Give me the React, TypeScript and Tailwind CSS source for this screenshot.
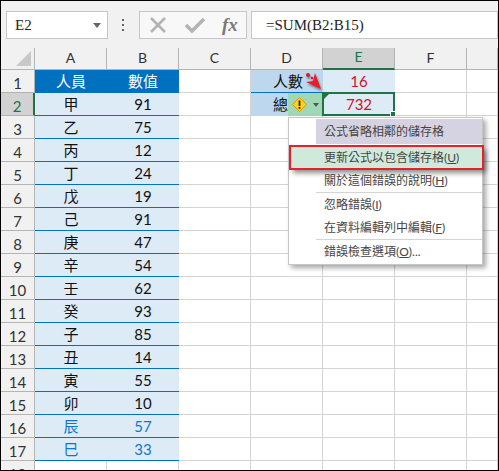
const people = ["甲", "乙", "丙", "丁", "戊", "己", "庚", "辛", "壬", "癸", "子", "丑", "寅", "卯", "辰", "巳"];
const values = [91, 75, 12, 24, 19, 91, 47, 54, 62, 93, 85, 14, 55, 10, 57, 33];
const columns = ["A", "B", "C", "D", "E", "F", ""];

function Blank() {
  return <div className="border-r border-b border-[#d4d4d4]" />;
}

function RowHead({ n, active }: { n: number; active?: boolean }) {
  return (
    <div
      className={`flex items-center justify-center border-b border-r text-[15px] pt-1 ${
        active ? "bg-[#d2d2d2] border-r-2 border-r-[#217346] border-b-[#b4b4b4] text-[#217346]" : "bg-[#f1f1f1] border-[#b4b4b4] text-[#333]"
      }`}
    >
      {n}
    </div>
  );
}

function Data({ text, tone }: { text: string | number; tone?: string }) {
  return (
    <div className={`flex items-center justify-center bg-[#ddebf7] border-b border-[#0070c0] text-[15px] ${tone ?? "text-[#111]"}`}>
      {text}
    </div>
  );
}

function MenuItem({ label, hotkey, tail }: { label: string; hotkey: string; tail?: string }) {
  return (
    <div className="flex h-[23px] items-center pl-[35px] text-[12px] text-[#444]">
      {label}(<span className="underline">{hotkey}</span>){tail}
    </div>
  );
}

export default function App() {
  return (
    <div className="relative w-[499px] h-[471px] overflow-hidden border border-black bg-white font-['Lato','Noto_Sans_CJK_TC',sans-serif]">
      <div className="flex h-[47px] items-center bg-[#f1f1f1] pl-[5px] pt-[1px]">
        <div className="flex h-[28px] w-[102px] items-center justify-between border border-[#c6c6c6] bg-white pl-2 pr-[6px] font-['Liberation_Serif',serif] text-[15px] text-[#222]">
          E2
          <span className="h-0 w-0 border-x-[4px] border-t-[5px] border-x-transparent border-t-[#666]" />
        </div>
        <div className="ml-[14px] flex w-[3px] flex-col gap-[3px]">
          <span className="h-[2px] w-[2px] bg-[#666]" />
          <span className="h-[2px] w-[2px] bg-[#666]" />
          <span className="h-[2px] w-[2px] bg-[#666]" />
        </div>
        <div className="ml-[14px] flex h-[28px] w-[108px] items-center border border-[#c6c6c6] bg-[#f8f8f8] pl-[9px]">
          <svg width="18" height="16" viewBox="0 0 18 16" fill="none" stroke="#b3b3b3" strokeWidth="2.6">
            <path d="M2 1 L16 15 M16 1 L2 15" />
          </svg>
          <svg className="ml-[18px]" width="20" height="16" viewBox="0 0 20 16" fill="none" stroke="#b3b3b3" strokeWidth="3.4">
            <path d="M1 8 L7 14 L19 2" />
          </svg>
          <span className="ml-[17px] font-['Liberation_Serif',serif] text-[19px] font-bold italic text-[#7a7a7a]">fx</span>
        </div>
        <div className="ml-[4px] flex h-[28px] flex-1 items-center border border-[#c6c6c6] bg-white pl-[14px] font-['Liberation_Serif',serif] text-[15px] text-[#222]">
          =SUM(B2:B15)
        </div>
      </div>

      <div className="grid grid-cols-[34px_72px_72px_72px_72px_72px_72px_1fr] grid-rows-[22px] auto-rows-[23px]">
        <div className="relative border-r border-b border-[#b4b4b4] bg-[#f1f1f1]">
          <span className="absolute bottom-[3px] right-[3px] h-[15px] w-[15px] bg-[#c8c8c8] [clip-path:polygon(100%_0,100%_100%,0_100%)]" />
        </div>
        {columns.map((c) => (
          <div
            key={c || "G"}
            className={`flex items-center justify-center border-r pb-[3px] text-[14px] ${
              c === "E" ? "border-b-2 border-[#217346] border-r-[#b4b4b4] bg-[#d2d2d2] text-[#217346]" : "border-b border-[#b4b4b4] bg-[#f1f1f1] text-[#333]"
            }`}
          >
            {c}
          </div>
        ))}

        <RowHead n={1} />
        <div className="flex items-center justify-center bg-[#0070c0] text-[15px] text-white">人員</div>
        <div className="flex items-center justify-center bg-[#0070c0] text-[15px] text-white">數值</div>
        <Blank />
        <div className="flex items-center justify-end bg-[#bdd7ee] border-b border-[#0070c0] pr-[20px] text-[15px] text-[#111]">人數</div>
        <div className="flex items-center justify-center bg-[#ddebf7] text-[15px] text-[#d0102a]">16</div>
        <Blank />
        <Blank />

        {people.map((p, i) => {
          const row = i + 2;
          const blue = i >= 14 ? "text-[#0f76c9]" : undefined;
          return (
            <div key={p} className="contents">
              <RowHead n={row} active={row === 2} />
              <Data text={p} tone={blue} />
              <Data text={values[i]} tone={blue} />
              <Blank />
              {row === 2 ? (
                <>
                  <div className="flex items-center bg-[#bdd7ee] pl-[22px] text-[15px] text-[#111]">總</div>
                  <div className="flex items-center justify-center bg-[#ddebf7] text-[15px] text-[#d0102a]">732</div>
                </>
              ) : (
                <>
                  <Blank />
                  <Blank />
                </>
              )}
              <Blank />
              <Blank />
            </div>
          );
        })}

        <RowHead n={18} />
        <Blank />
        <Blank />
        <Blank />
        <Blank />
        <Blank />
        <Blank />
        <Blank />
      </div>

      {/* selected cell E2 */}
      <div className="absolute left-[321px] top-[91px] h-[24px] w-[73px] border-2 border-[#217346]">
        <span className="absolute left-0 top-0 h-[5px] w-[5px] bg-[#217346] [clip-path:polygon(0_0,100%_0,0_100%)]" />
        <span className="absolute -bottom-[3px] -right-[3px] h-[6px] w-[6px] border border-white bg-[#217346]" />
      </div>

      {/* error smart tag */}
      <div className="absolute left-[287px] top-[92px] flex h-[23px] w-[34px] items-center bg-[#a0d8b5] pl-[4px]">
        <svg width="15" height="15" viewBox="0 0 15 15">
          <path d="M7.5 0.5 L14.5 7.5 L7.5 14.5 L0.5 7.5 Z" fill="#ffd21f" stroke="#d99a00" />
          <rect x="6.6" y="3.5" width="1.8" height="5.5" fill="#222" />
          <rect x="6.6" y="10" width="1.8" height="1.8" fill="#222" />
        </svg>
        <span className="ml-[6px] h-0 w-0 border-x-[3px] border-t-[4px] border-x-transparent border-t-[#555]" />
      </div>

      {/* red arrow */}
      <svg className="absolute left-[302px] top-[69px] drop-shadow-[1px_2px_1px_rgba(0,0,0,0.45)]" width="22" height="24" viewBox="0 0 22 24">
        <circle cx="5" cy="5" r="2" fill="#e8112d" />
        <circle cx="9" cy="8" r="1.2" fill="#e8112d" />
        <path d="M18 19 L3 12 L10 11 L12 3 Z" fill="#ed1c24" />
      </svg>

      {/* error menu */}
      <div className="absolute left-[287px] top-[116px] w-[195px] border border-[#c6c6c6] bg-white py-[1px] shadow-[3px_3px_5px_rgba(0,0,0,0.35)]">
        <div className="ml-[27px] flex h-[25px] items-center bg-[#d5d3e2] pl-[8px] text-[12px] text-[#444]">公式省略相鄰的儲存格</div>
        <div className="relative ml-[1px] -mr-[1px] mt-[2px] flex h-[23px] items-center bg-[#cfeadb] pl-[34px] text-[12px] text-[#444] shadow-[3px_4px_5px_rgba(0,0,0,0.45)] outline-2 -outline-offset-1 outline-[#e8202a]">
          更新公式以包含儲存格(<span className="underline">U</span>)
        </div>
        <MenuItem label="關於這個錯誤的說明" hotkey="H" />
        <div className="ml-[27px] h-px bg-[#d4d4d4]" />
        <MenuItem label="忽略錯誤" hotkey="I" />
        <MenuItem label="在資料編輯列中編輯" hotkey="F" />
        <div className="ml-[27px] h-px bg-[#d4d4d4]" />
        <MenuItem label="錯誤檢查選項" hotkey="O" tail="..." />
      </div>
    </div>
  );
}
